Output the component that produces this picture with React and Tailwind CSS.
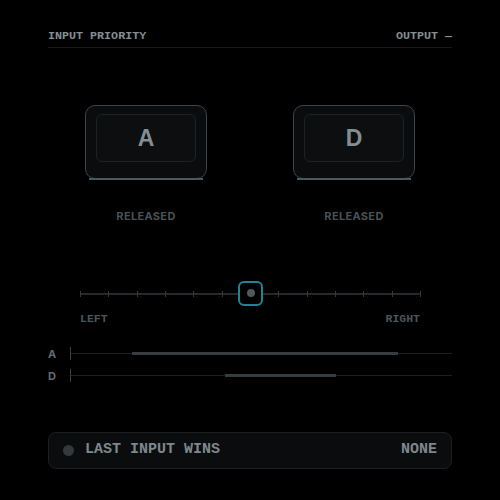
import React from "react";

const mono = { fontFamily: '"Liberation Mono", "DejaVu Sans Mono", monospace' };

function Key({ letter }) {
  return (
    <div className="flex flex-col items-center">
      <div className="flex flex-col w-[122px]">
        <div className="h-[74px] rounded-[10px] border-[1.5px] border-[#3a454b] bg-[#0a0c0d] pt-[8px] px-[10px] pb-[16px]">
          <div className="h-full rounded-[6px] border border-[#1c2225] bg-[#0c0e0f] flex items-center justify-center">
            <span className="text-[23px] font-black text-[#858d92] leading-none" style={{ fontFamily: '"Liberation Sans", Arial, sans-serif' }}>{letter}</span>
          </div>
        </div>
        <div className="h-[2px] mx-[4px] -mt-[1px] bg-[#4d585e]" />
      </div>
      <div className="mt-[28px] text-[11px] font-bold tracking-[0.03em] text-[#4a5055]" style={{ fontFamily: 'Inter, "Liberation Sans", sans-serif' }}>RELEASED</div>
    </div>
  );
}

function Row({ label, from, to }) {
  return (
    <div className="flex items-center h-[14px]">
      <div className="w-[22px] text-[11px] font-bold text-[#646b70]" style={{ fontFamily: 'Inter, "Liberation Sans", sans-serif' }}>{label}</div>
      <div className="w-px h-[13px] bg-[#3a3f43]" />
      <div className="relative flex-1 h-px bg-[#1c2023]">
        <div className="absolute top-[-1px] h-[3px] bg-[#373c40]" style={{ left: `${from}px`, width: `${to - from}px` }} />
      </div>
    </div>
  );
}

export default function App() {
  const ticks = Array.from({ length: 13 }, (_, i) => i);
  return (
    <div className="w-[500px] h-[500px] bg-black px-12 pt-[28px]">
      <div className="flex justify-between text-[11.7px] leading-[16px] font-bold text-[#858e93] pb-[3px] border-b border-[#16191b]" style={mono}>
        <span>INPUT PRIORITY</span>
        <span>OUTPUT —</span>
      </div>

      <div className="grid grid-cols-2 gap-3 mt-[57px]">
        <Key letter="A" />
        <Key letter="D" />
      </div>

      <div className="mx-[32px] mt-[56px]">
        <div className="relative h-[26px] flex items-center">
          <div className="w-full h-[2px] bg-[#25292c]" />
          {ticks.map((i) => (
            <div key={i} className="absolute top-[10px] w-px h-[6px] bg-[#33383b]" style={{ left: `${(i * 340) / 12}px` }} />
          ))}
          <div className="absolute left-[158px] top-0 w-[25px] h-[25px] rounded-[6px] border-2 border-[#1f8594] bg-black flex items-center justify-center">
            <div className="w-[8px] h-[8px] rounded-full bg-[#52575b]" />
          </div>
        </div>
        <div className="flex justify-between mt-[3px] text-[11.5px] font-bold text-[#4d5458]" style={mono}>
          <span>LEFT</span>
          <span>RIGHT</span>
        </div>
      </div>

      <div className="mt-[20px] flex flex-col gap-[8px]">
        <Row label="A" from={61} to={327} />
        <Row label="D" from={154} to={265} />
      </div>

      <div className="mt-[49px] h-[37px] rounded-[8px] border border-[#1c2022] bg-[#0a0c0d] flex items-center px-[14px]">
        <div className="w-[11px] h-[11px] rounded-full bg-[#34393c]" />
        <span className="ml-[11px] text-[15px] font-bold text-[#7e878c]" style={mono}>LAST INPUT WINS</span>
        <span className="ml-auto text-[15px] font-bold text-[#7e878c]" style={mono}>NONE</span>
      </div>
    </div>
  );
}
